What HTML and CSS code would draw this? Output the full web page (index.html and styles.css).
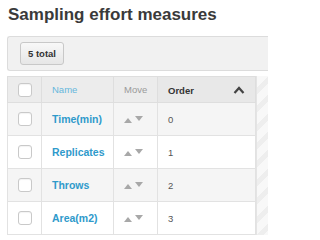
FILE: index.html
```html
<!DOCTYPE html>
<html>
<head>
<meta charset="utf-8">
<link rel="stylesheet" href="styles.css">
</head>
<body>
<div class="page">
<h1 class="title">Sampling effort measures</h1>
<div class="toolbar"><span class="btn">5 total</span></div>
<div class="grid-wrap">
  <table class="grid">
    <colgroup><col class="c-check"><col class="c-name"><col class="c-move"><col class="c-order"></colgroup>
    <thead>
      <tr>
        <th><span class="cb"></span></th>
        <th class="h-name">Name</th>
        <th class="h-move">Move</th>
        <th class="h-order"><span>Order</span><svg class="caret" width="12" height="8" viewBox="0 0 12 8"><path d="M1.5 7 L6 2 L10.5 7" fill="none" stroke="#444" stroke-width="2.2"/></svg></th>
      </tr>
    </thead>
    <tbody>
      <tr><td><span class="cb"></span></td><td class="name">Time(min)</td><td class="move"><span class="up"></span><span class="down"></span></td><td class="ord">0</td></tr>
      <tr><td><span class="cb"></span></td><td class="name">Replicates</td><td class="move"><span class="up"></span><span class="down"></span></td><td class="ord">1</td></tr>
      <tr><td><span class="cb"></span></td><td class="name">Throws</td><td class="move"><span class="up"></span><span class="down"></span></td><td class="ord">2</td></tr>
      <tr><td><span class="cb"></span></td><td class="name">Area(m2)</td><td class="move"><span class="up"></span><span class="down"></span></td><td class="ord">3</td></tr>
    </tbody>
  </table>
  <div class="stripes"></div>
</div>
</div>
</body>
</html>
```
FILE: styles.css
```css
html, body { margin: 0; padding: 0; background: #fff; }
body { font-family: "Liberation Sans", Arial, sans-serif; overflow: hidden; }
.page { width: 261px; padding-left: 7px; overflow: hidden; }
.title { margin: 0; padding: 5px 0 0 1px; font-size: 17px; line-height: 20px; font-weight: bold; color: #3a3a3a; height: 31px; box-sizing: border-box; }
.toolbar { margin-top: 5px; height: 35px; box-sizing: border-box; border: 1px solid #dcdcdc; border-right: none; border-radius: 3px 0 0 3px; background: #f1f1f1; padding: 5px 0 0 12px; }
.btn { display: inline-block; box-sizing: border-box; width: 44px; height: 23px; line-height: 21px; text-align: center; font-size: 9.5px; font-weight: bold; color: #333; border: 1px solid #c8c8c8; border-radius: 3px; background: linear-gradient(#f8f8f8, #e6e6e6); }
.grid-wrap { display: flex; margin-top: 5px; }
.grid { border-collapse: collapse; width: 248px; flex: none; table-layout: fixed; border-left: 1px solid #dedede; }
.c-check { width: 34px; } .c-name { width: 72px; } .c-move { width: 44px; } .c-order { width: 98px; }
.grid th { height: 26px; box-sizing: border-box; padding: 0; background: #ececec; border: 1px solid #dedede; font-size: 9.5px; font-weight: normal; text-align: left; }
.grid th:first-child, .grid td:first-child { text-align: center; }
.h-name { color: #64b7dc; padding-left: 10px !important; }
.h-move { color: #9a9a9a; padding-left: 10px !important; }
.h-order { color: #333; font-weight: bold !important; padding: 0 10px 0 10px !important; background: #e8e8e8 !important; }
.h-order span { vertical-align: middle; }
.caret { float: right; margin-top: 2px; }
.grid td { height: 33px; box-sizing: border-box; padding: 0; border: 1px solid #e2e2e2; font-size: 9.5px; color: #555; }
.grid tbody tr:nth-child(odd) td { background: #f5f5f5; }
.grid tbody tr:nth-child(even) td { background: #fff; }
.name { font-weight: bold; font-size: 10.5px !important; color: #2f9acb !important; padding-left: 10px !important; }
.move { padding-left: 10px !important; }
.ord { padding-left: 10px !important; }
.cb { display: inline-block; width: 12px; height: 12px; border: 1px solid #c9c9c9; border-radius: 3px; background: #fff; vertical-align: middle; box-shadow: inset 0 1px 1px rgba(0,0,0,0.05); }
.up, .down { display: inline-block; width: 0; height: 0; border-left: 4px solid transparent; border-right: 4px solid transparent; vertical-align: middle; }
.up { border-bottom: 5px solid #a8a8a8; margin-right: 3px; margin-top: 2px; }
.down { border-top: 5px solid #a8a8a8; margin-top: -2px; border-left-width: 4.5px; border-right-width: 4.5px; }
.stripes { flex: 1; border-left: 1px solid #e4e4e4; background: repeating-linear-gradient(135deg, #f8f8f8 0 8px, #eeeeee 8px 13px); }
```
